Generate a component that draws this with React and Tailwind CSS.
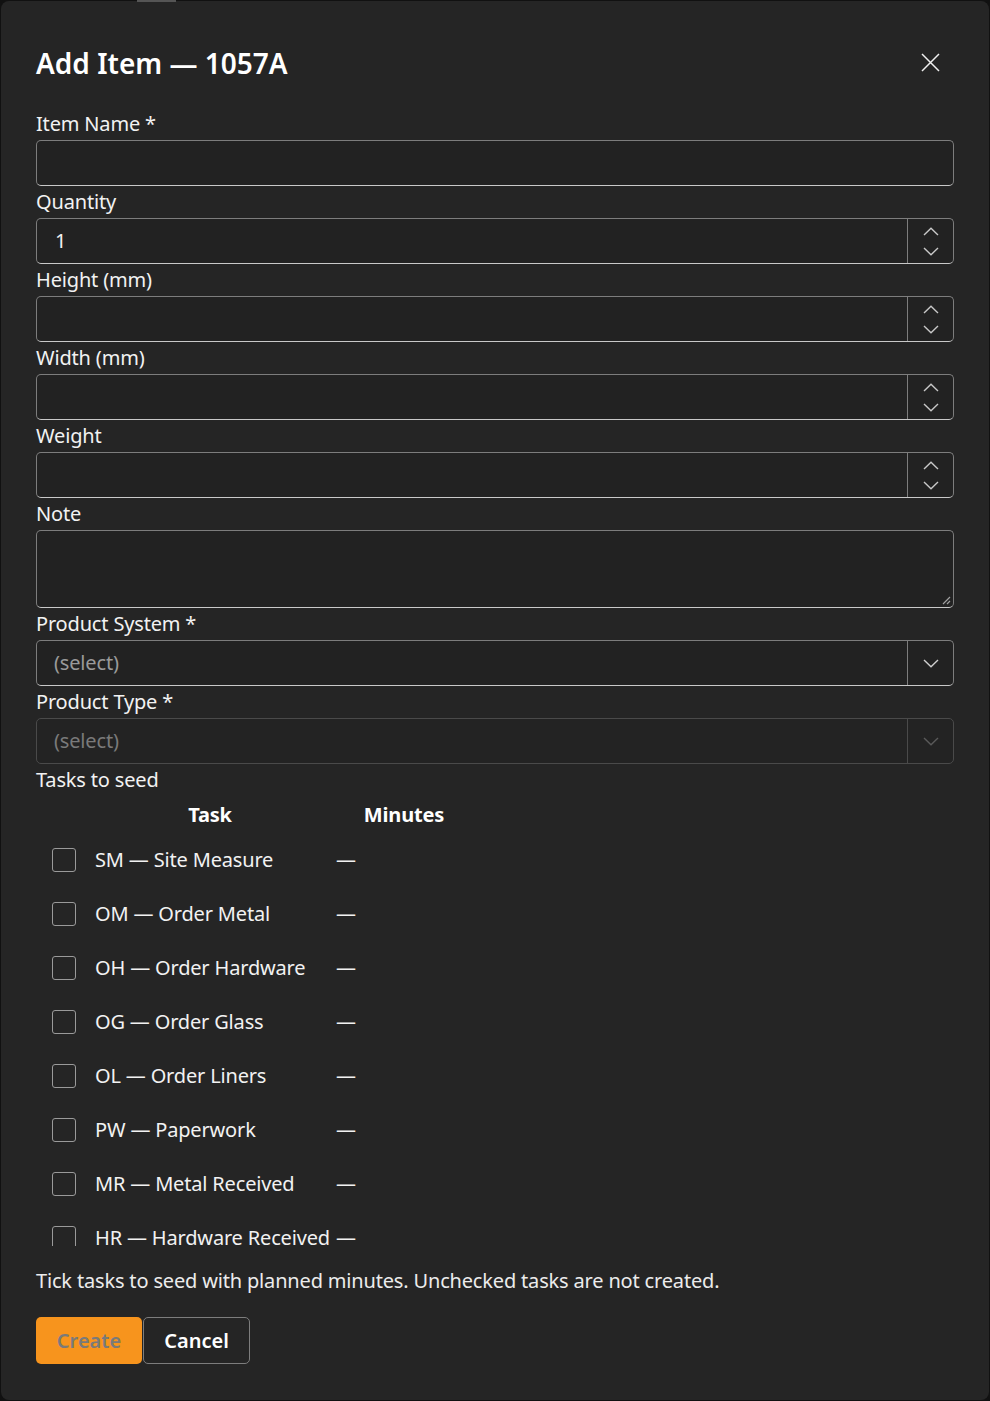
import React from "react";

const font = { fontFamily: '"Noto Sans", "Open Sans", sans-serif' };

function Label({ children }) {
  return (
    <div className="flex h-[32px] items-center text-[20px] leading-none tracking-[-0.17px] text-[#f2f2f2]">
      {children}
    </div>
  );
}

function ChevronUp() {
  return (
    <svg width="16" height="9" viewBox="0 0 16 9" fill="none">
      <path d="M1 8L8 1.2L15 8" stroke="#c8c8c8" strokeWidth="1.4" />
    </svg>
  );
}
function ChevronDown({ color = "#c8c8c8" }) {
  return (
    <svg width="16" height="9" viewBox="0 0 16 9" fill="none">
      <path d="M1 1L8 7.8L15 1" stroke={color} strokeWidth="1.4" />
    </svg>
  );
}

function TextBox() {
  return (
    <div className="h-[46px] rounded-[5px] border border-[#7d7d7d] border-b-[#c9c9c9] bg-[#222222]" />
  );
}

function NumberBox({ value }) {
  return (
    <div className="flex h-[46px] rounded-[5px] border border-[#7d7d7d] border-b-[#c9c9c9] bg-[#222222]">
      <div className="flex flex-1 items-center pl-[18px] text-[20px] text-[#f2f2f2]">{value}</div>
      <div className="flex w-[46px] flex-col items-center justify-center gap-[11px] border-l border-[#7d7d7d]">
        <ChevronUp />
        <ChevronDown />
      </div>
    </div>
  );
}

function SelectBox({ disabled }) {
  return (
    <div
      className={
        disabled
          ? "flex h-[46px] rounded-[5px] border border-[#4a4a4a] bg-[#232323]"
          : "flex h-[46px] rounded-[5px] border border-[#7d7d7d] border-b-[#c9c9c9] bg-[#222222]"
      }
    >
      <div
        className={
          disabled
            ? "flex flex-1 items-center pl-[17px] text-[20px] tracking-[-0.17px] text-[#7a7a7a]"
            : "flex flex-1 items-center pl-[17px] text-[20px] tracking-[-0.17px] text-[#9a9a9a]"
        }
      >
        (select)
      </div>
      <div
        className={
          disabled
            ? "flex w-[46px] items-center justify-center border-l border-[#4a4a4a]"
            : "flex w-[46px] items-center justify-center border-l border-[#7d7d7d]"
        }
      >
        <ChevronDown color={disabled ? "#5a5a5a" : "#d0d0d0"} />
      </div>
    </div>
  );
}

const tasks = [
  "SM — Site Measure",
  "OM — Order Metal",
  "OH — Order Hardware",
  "OG — Order Glass",
  "OL — Order Liners",
  "PW — Paperwork",
  "MR — Metal Received",
  "HR — Hardware Received",
];

export default function App() {
  return (
    <div className="min-h-screen bg-[#111111] p-px" style={font}>
      <div className="relative h-[1399px] overflow-hidden rounded-[8px] bg-[#252525] px-[35px] pt-[43px]">
        <div className="flex h-[37px] items-center justify-between">
          <h1 className="text-[28px] font-semibold leading-none text-white">Add Item — 1057A</h1>
          <button className="mr-[13px] flex h-[22px] w-[22px] items-center justify-center">
            <svg width="19" height="19" viewBox="0 0 19 19" fill="none">
              <path d="M1 1L18 18M18 1L1 18" stroke="#f0f0f0" strokeWidth="1.5" />
            </svg>
          </button>
        </div>
        <div className="mt-[27px]">
          <Label>Item Name *</Label>
          <TextBox />
          <Label>Quantity</Label>
          <NumberBox value="1" />
          <Label>Height (mm)</Label>
          <NumberBox value="" />
          <Label>Width (mm)</Label>
          <NumberBox value="" />
          <Label>Weight</Label>
          <NumberBox value="" />
          <Label>Note</Label>
          <div className="relative h-[78px] rounded-[5px] border border-[#7d7d7d] border-b-[#c9c9c9] bg-[#222222]">
            <svg className="absolute bottom-[2px] right-[2px]" width="10" height="10" viewBox="0 0 10 10" fill="none">
              <path d="M9 2L2 9M9 6L6 9" stroke="#a0a0a0" strokeWidth="1.2" />
            </svg>
          </div>
          <Label>Product System *</Label>
          <SelectBox />
          <Label>Product Type *</Label>
          <SelectBox disabled />
          <Label>Tasks to seed</Label>
          <div className="h-[450px] overflow-hidden">
            <div className="grid h-[37px] grid-cols-[50px_248px_140px] items-center text-[20px] font-bold tracking-[-0.17px] text-white">
              <div />
              <div className="text-center">Task</div>
              <div className="text-center">Minutes</div>
            </div>
            {tasks.map((t) => (
              <div
                key={t}
                className="grid h-[54px] grid-cols-[50px_248px_140px] items-center text-[20px] tracking-[-0.17px] text-[#f2f2f2]"
              >
                <div className="flex justify-end pr-[10px]">
                  <div className="h-[24px] w-[24px] rounded-[3px] border-[1.5px] border-[#9a9a9a]" />
                </div>
                <div className="whitespace-nowrap pl-[9px]">{t}</div>
                <div className="pl-[2px]">—</div>
              </div>
            ))}
          </div>
          <div className="mt-[21px] flex h-[28px] items-center text-[20px] tracking-[-0.17px] text-[#ececec]">
            Tick tasks to seed with planned minutes. Unchecked tasks are not created.
          </div>
          <div className="mt-[22px] flex gap-px">
            <button className="h-[47px] w-[106px] rounded-[5px] bg-[#f7941d] text-[20px] font-semibold text-[#7a7a7a]">
              Create
            </button>
            <button className="h-[47px] w-[107px] rounded-[5px] border border-[#7d7d7d] bg-[#252525] text-[20px] font-semibold text-white">
              Cancel
            </button>
          </div>
        </div>
      </div>
      <div className="absolute left-[137px] top-0 h-[2px] w-[39px] bg-[#555555]" />
    </div>
  );
}
